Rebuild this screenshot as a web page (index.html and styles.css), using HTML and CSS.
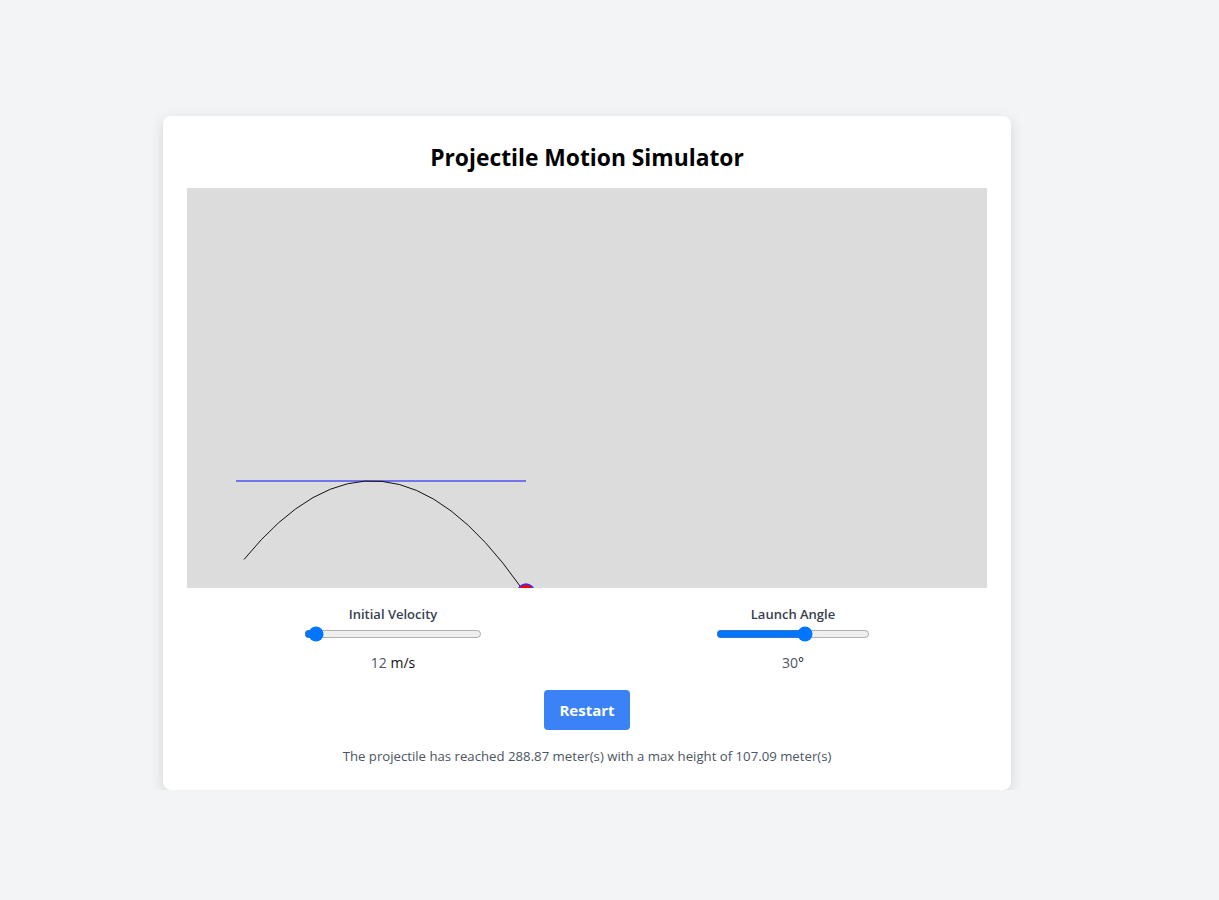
FILE: index.html
```html
<!DOCTYPE html>
<html lang="en">
<head>
<meta charset="utf-8">
<title>Projectile Motion Simulator</title>
<link rel="stylesheet" href="styles.css">
</head>
<body>
<main class="page">
  <section class="card">
    <h1 class="title">Projectile Motion Simulator</h1>
    <div class="stage">
      <svg class="plot" width="800" height="400" viewBox="0 0 800 400">
        <rect width="800" height="400" fill="#dcdcdc"/>
        <line x1="49" y1="293" x2="339" y2="293" stroke="#5050f0" stroke-width="1.3"/>
        <path d="M57 371.5 Q195 202 333 398" fill="none" stroke="#111" stroke-width="1"/>
        <circle cx="339" cy="404" r="8" fill="#ff0000" stroke="#3030ff" stroke-width="1.5"/>
      </svg>
    </div>
    <div class="controls">
      <div class="control">
        <label class="control-label" for="vel">Initial Velocity</label>
        <input class="range range-vel" id="vel" type="range" min="10" max="100" value="12">
        <div class="control-value"><span class="num">12</span> <span class="unit">m/s</span></div>
      </div>
      <div class="control">
        <label class="control-label" for="ang">Launch Angle</label>
        <input class="range range-ang" id="ang" type="range" min="0" max="100" value="59">
        <div class="control-value"><span class="num">30</span><span class="unit">°</span></div>
      </div>
    </div>
    <div class="actions">
      <button class="btn" type="button">Restart</button>
    </div>
    <p class="status">The projectile has reached 288.87 meter(s) with a max height of 107.09 meter(s)</p>
  </section>
</main>
</body>
</html>
```

FILE: styles.css
```css
html, body {
  margin: 0;
  padding: 0;
}
body {
  background: #f3f4f6;
  font-family: "Open Sans", "Noto Sans", "Liberation Sans", sans-serif;
  color: #111;
}
.page {
  display: flex;
  justify-content: flex-start;
  padding: 116px 0 0 163px;
}
.card {
  width: 800px;
  background: #fff;
  border-radius: 8px;
  padding: 24px;
  box-shadow: 0 4px 14px rgba(0, 0, 0, 0.13);
}
.title {
  margin: 2px 0 14px;
  font-size: 22.8px;
  line-height: 32px;
  font-weight: 700;
  text-align: center;
  color: #000;
}
.stage {
  width: 800px;
  height: 400px;
  overflow: hidden;
}
.plot {
  display: block;
}
.controls {
  display: flex;
  justify-content: space-around;
  margin-top: 17px;
}
.control {
  display: flex;
  flex-direction: column;
  align-items: center;
}
.control-label {
  font-size: 13px;
  line-height: 18px;
  font-weight: 600;
  color: #374151;
}
.range {
  margin: 3px 0 2px;
  accent-color: #0075ff;
}
.range-vel { width: 178px; }
.range-ang { width: 154px; }
.control-value {
  margin-top: 9px;
  font-size: 14px;
  line-height: 20px;
  color: #4b5563;
}
.control-value .unit {
  color: #111;
}
.actions {
  display: flex;
  justify-content: center;
  margin-top: 17px;
}
.btn {
  width: 86px;
  height: 40px;
  border: 0;
  border-radius: 4px;
  background: #3b82f6;
  color: #fff;
  font-family: inherit;
  font-size: 15px;
  font-weight: 700;
}
.status {
  margin: 16px 0 0;
  text-align: center;
  font-size: 13.2px;
  line-height: 20px;
  color: #4b5563;
}
```
